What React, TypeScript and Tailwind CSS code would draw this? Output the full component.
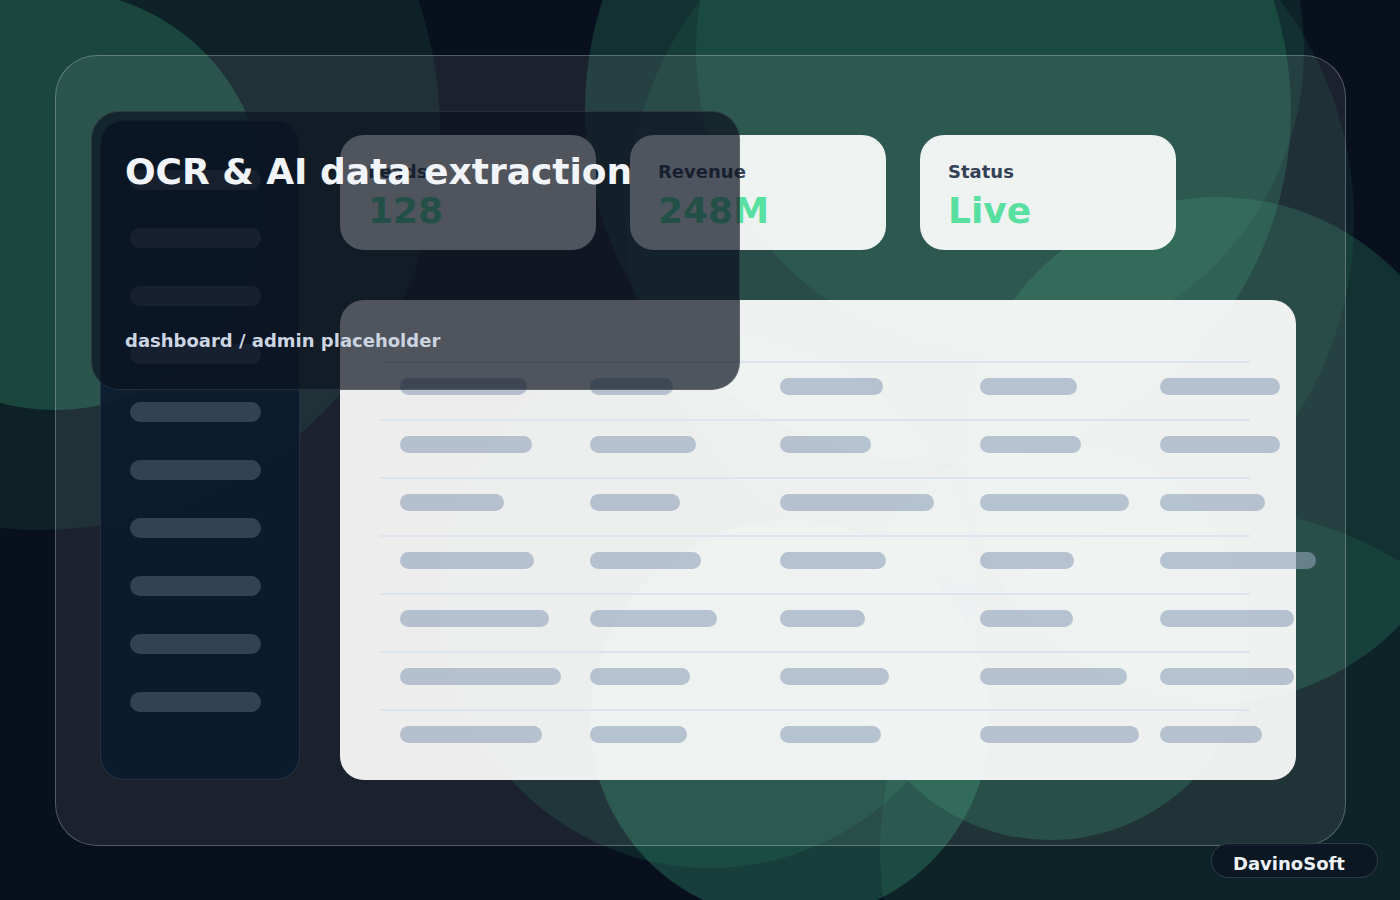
const rows = [
  [127, 83, 103, 97, 120],
  [132, 106, 91, 101, 120],
  [104, 90, 154, 149, 105],
  [134, 111, 106, 94, 156],
  [149, 127, 85, 93, 134],
  [161, 100, 109, 147, 134],
  [142, 97, 101, 159, 102],
]

const colWidths = ['w-[190px]', 'w-[190px]', 'w-[200px]', 'w-[180px]', 'w-[160px]']

const stats = [
  { label: 'Leads', value: '128' },
  { label: 'Revenue', value: '248M' },
  { label: 'Status', value: 'Live' },
]

function Backdrop() {
  return (
    <div className="absolute inset-0">
      <div className="absolute left-[-360px] top-[-270px] w-[800px] h-[800px] rounded-full bg-[#3caa7d]/[0.11]" />
      <div className="absolute left-[-155px] top-[-10px] w-[420px] h-[420px] rounded-full bg-[#3caa7d]/[0.27]" />
      <div className="absolute left-[585px] top-[-243px] w-[706px] h-[706px] rounded-full bg-[#3caa7d]/[0.22]" />
      <div className="absolute left-[626px] top-[-144px] w-[728px] h-[728px] rounded-full bg-[#3caa7d]/[0.1]" />
      <div className="absolute left-[696px] top-[-254px] w-[608px] h-[608px] rounded-full bg-[#3caa7d]/[0.12]" />
      <div className="absolute left-[964px] top-[197px] w-[506px] h-[506px] rounded-full bg-[#3caa7d]/[0.22]" />
      <div className="absolute left-[880px] top-[510px] w-[680px] h-[680px] rounded-full bg-[#3caa7d]/[0.12]" />
      <div className="absolute left-[442px] top-[332px] w-[536px] h-[536px] rounded-full bg-[#3caa7d]/[0.14]" />
      <div className="absolute left-[590px] top-[520px] w-[400px] h-[400px] rounded-full bg-[#3caa7d]/[0.3]" />
      <div className="absolute left-[850px] top-[440px] w-[400px] h-[400px] rounded-full bg-[#3caa7d]/[0.22]" />
    </div>
  )
}

export default function App() {
  return (
    <div className="relative w-[1400px] h-[900px] overflow-hidden bg-[#08101d] font-['DejaVu_Sans',sans-serif]">
      <Backdrop />

      {/* mock dashboard frame */}
      <div className="relative m-[55px] w-[1291px] h-[791px] rounded-[42px] border border-white/25 bg-white/[0.08] pl-[44px] pt-[64px] flex gap-[40px]">
        <aside className="w-[200px] h-[660px] rounded-[24px] border border-white/10 bg-[#0a1a2e]/90 pt-[49px] pl-[29px] flex flex-col gap-[38px]">
          {Array.from({ length: 10 }).map((_, i) => (
            <div key={i} className="w-[131px] h-[20px] rounded-full bg-[#334155]" />
          ))}
        </aside>

        <div className="flex flex-col pt-[15px]">
          <div className="flex gap-[34px]">
            {stats.map(s => (
              <div key={s.label} className="w-[256px] h-[115px] rounded-[24px] bg-white/[0.92] pt-[25px] px-[28px]">
                <div className="text-[18px] leading-6 font-bold text-[#334155]">{s.label}</div>
                <div className="mt-[6px] text-[36px] leading-[42px] font-bold text-[#58e0a0]">{s.value}</div>
              </div>
            ))}
          </div>

          <div className="mt-[50px] w-[956px] h-[480px] rounded-[24px] bg-white/[0.92] pt-[61px]">
            {rows.map((row, r) => (
              <div key={r} className="h-[58px]">
                <div className="ml-[40px] w-[870px] h-[2px] bg-[#dbe4ef]" />
                <div className="mt-[15px] pl-[60px] flex">
                  {row.map((w, c) => (
                    <div key={c} className={`${colWidths[c]} shrink-0`}>
                      <div className="h-[17px] rounded-full bg-slate-400/60" style={{ width: w }} />
                    </div>
                  ))}
                </div>
              </div>
            ))}
          </div>
        </div>
      </div>

      {/* title card */}
      <div className="absolute left-[91px] top-[111px] w-[649px] h-[279px] rounded-[28px] border border-white/10 bg-[#0b1220]/70 pl-[33px] pt-[39px]">
        <h1 className="text-[36px] leading-[42px] font-bold text-[#f1f5f9] whitespace-nowrap">OCR &amp; AI data extraction</h1>
        <p className="mt-[136px] text-[18px] leading-6 font-bold text-[#cbd5e1]">dashboard / admin placeholder</p>
      </div>

      <div className="absolute right-[22px] bottom-[22px] w-[167px] h-[35px] rounded-full border border-white/15 bg-[#0b1622]/90 flex items-center pl-[21px] pt-[5px]">
        <span className="text-[18px] font-bold text-[#eef2f7]">DavinoSoft</span>
      </div>
    </div>
  )
}
